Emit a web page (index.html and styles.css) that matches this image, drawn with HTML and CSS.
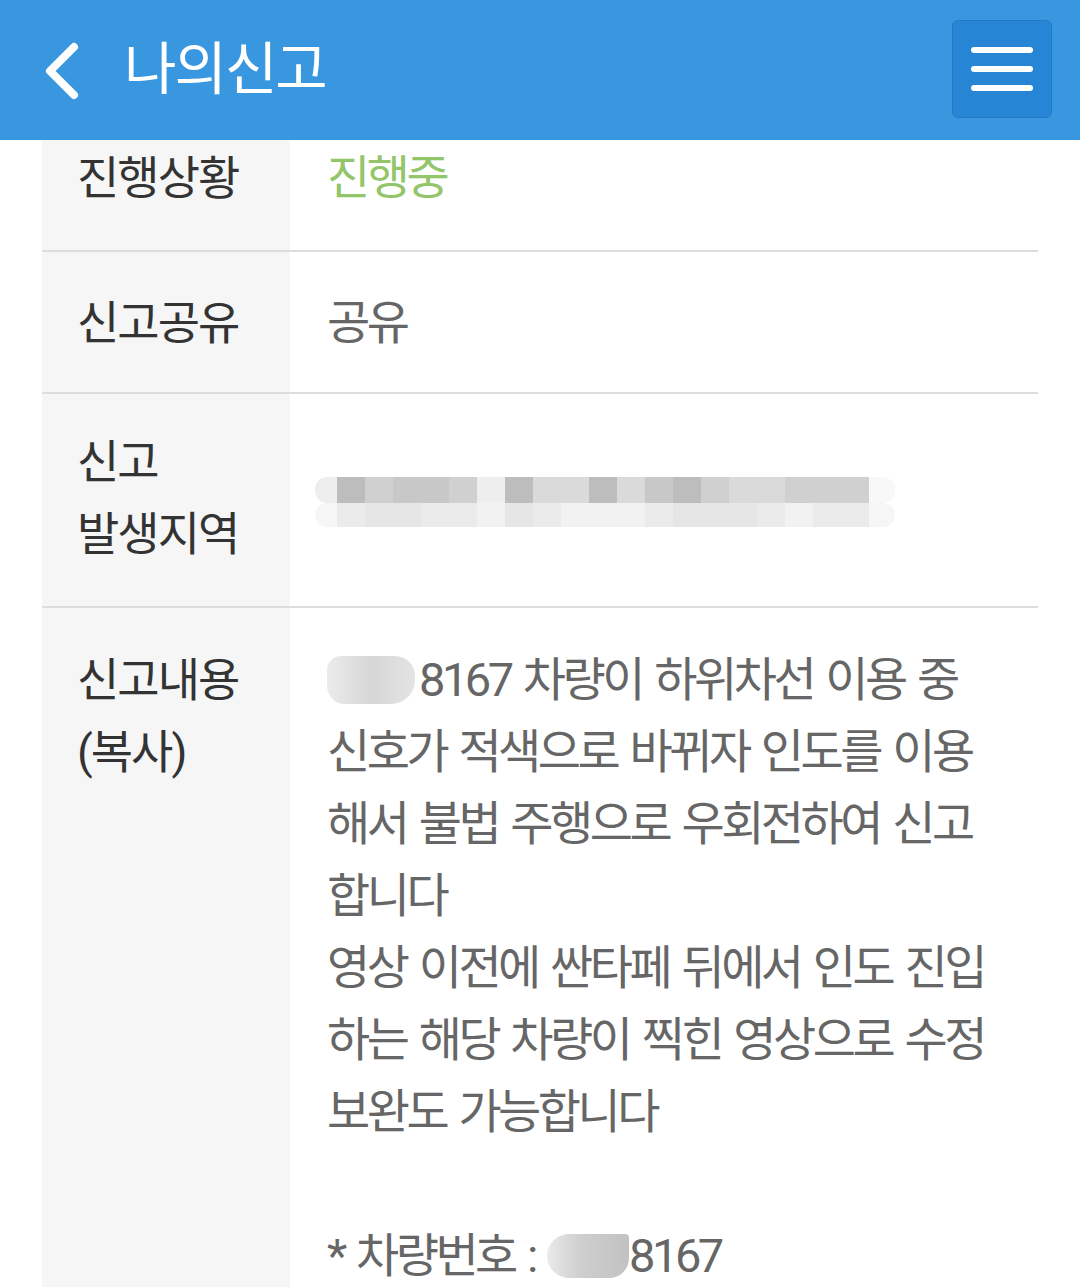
FILE: index.html
```html
<!DOCTYPE html>
<html lang="ko">
<head>
  <meta charset="UTF-8">
  <title>나의신고</title>
  <link rel="stylesheet" href="styles.css">
</head>
<body>
<div class="topbar">
  <svg class="back" width="40" height="60" viewBox="0 0 40 60">
    <polyline points="32,6 8,30 32,54" fill="none" stroke="#fff" stroke-width="8" stroke-linecap="round" stroke-linejoin="round"/>
  </svg>
  <div class="titulo">나의신고</div>
  <div class="menu-btn">
    <span></span><span></span><span></span>
  </div>
</div>

<div class="detalhe">
  <!-- primeira linha cortada pelo scroll -->
  <div class="linha primeira">
    <div class="rotulo">진행상황</div>
    <div class="valor verde">진행중</div>
  </div>

  <div class="linha">
    <div class="rotulo">신고공유</div>
    <div class="valor">공유</div>
  </div>

  <div class="linha endereco">
    <div class="rotulo">신고<br>발생지역</div>
    <div class="valor meio">
      <div class="mosaico">
        <div class="faixa escura">
          <i class="c5"></i><i class="c1"></i><i class="c3"></i><i class="c2"></i><i class="c2"></i><i class="c3"></i><i class="c5"></i><i class="c1"></i><i class="c4"></i><i class="c4"></i><i class="c1"></i><i class="c4"></i><i class="c2"></i><i class="c1"></i><i class="c3"></i><i class="c4"></i><i class="c4"></i><i class="c3"></i><i class="c3"></i><i class="c3"></i><i class="c6"></i>
        </div>
        <div class="faixa clara">
          <i class="d0"></i><i class="d2"></i><i class="d1"></i><i class="d1"></i><i class="d2"></i><i class="d2"></i><i class="d3"></i><i class="d1"></i><i class="d2"></i><i class="d3"></i><i class="d3"></i><i class="d3"></i><i class="d2"></i><i class="d1"></i><i class="d1"></i><i class="d1"></i><i class="d2"></i><i class="d3"></i><i class="d2"></i><i class="d2"></i><i class="d0"></i>
        </div>
      </div>
    </div>
  </div>

  <div class="linha ultima">
    <div class="rotulo">신고내용<br>(복사)</div>
    <div class="valor">
      <span class="borrao"></span>8167 차량이 하위차선 이용 중<br>
      신호가 적색으로 바뀌자 인도를 이용<br>
      해서 불법 주행으로 우회전하여 신고<br>
      합니다<br>
      영상 이전에 싼타페 뒤에서 인도 진입<br>
      하는 해당 차량이 찍힌 영상으로 수정<br>
      보완도 가능합니다<br>
      <br>
      * 차량번호 : <span class="borrao curto"></span>8167
    </div>
  </div>
</div>
</body>
</html>
```

FILE: styles.css
```css
body {
  margin: 0;
  padding: 0;
  background-color: #fff;
  font-family: Roboto, "Noto Sans CJK KR", sans-serif;
}

.topbar {
  height: 140px;
  background-color: #3997df;
  display: flex;
  align-items: center;
  padding: 0 28px 0 42px;
  box-sizing: border-box;
}

.back {
  display: block;
  margin-top: 2px;
}

.titulo {
  color: #fff;
  font-size: 57px;
  letter-spacing: -2px;
  margin-left: 42px;
  line-height: 1;
  margin-top: -2px;
}

.menu-btn {
  margin-left: auto;
  width: 98px;
  height: 96px;
  background-color: #2686d5;
  border: 1px solid #2379c6;
  border-radius: 6px;
  display: flex;
  flex-direction: column;
  align-items: center;
  justify-content: center;
  gap: 13px;
  margin-top: -2px;
}

.menu-btn span {
  display: block;
  width: 62px;
  height: 6px;
  border-radius: 3px;
  background-color: #fff;
}

.detalhe {
  margin: 0 42px;
}

.linha {
  display: grid;
  grid-template-columns: 248px 1fr;
  border-bottom: 2px solid #dddddd;
}

.linha.ultima {
  border-bottom: none;
}

.rotulo {
  background-color: #f6f6f6;
  color: #333;
  font-size: 46px;
  letter-spacing: -2px;
  line-height: 72px;
  padding: 35px 0 33px 35px;
}

.valor {
  color: #666;
  font-size: 47px;
  letter-spacing: -3.5px;
  word-spacing: 4px;
  line-height: 72px;
  padding: 35px 20px 33px 37px;
}

.primeira .rotulo,
.primeira .valor {
  padding-top: 2px;
  padding-bottom: 36px;
}

.endereco .rotulo,
.endereco .valor {
  padding-top: 32px;
  padding-bottom: 36px;
}

.ultima .rotulo,
.ultima .valor {
  padding-top: 36px;
}

.verde {
  color: #93c56a;
}

.meio {
  display: flex;
  align-items: center;
  padding-left: 25px;
}

.mosaico {
  margin-top: 8px;
}

.faixa {
  display: flex;
}

.faixa i {
  display: block;
  width: 28px;
}

.faixa i:first-child {
  width: 22px;
  border-radius: 12px 0 0 12px;
}

.faixa i:last-child {
  width: 26px;
  border-radius: 0 12px 12px 0;
}

.faixa.escura i {
  height: 26px;
}

.faixa.clara i {
  height: 24px;
}

.c1 { background-color: #bdbdbd; }
.c2 { background-color: #c8c8c8; }
.c3 { background-color: #d0d0d0; }
.c4 { background-color: #dadada; }
.c5 { background-color: #eeeeee; }
.c6 { background-color: #f8f8f8; }
.d0 { background-color: #f6f6f6; }
.d1 { background-color: #e6e6e6; }
.d2 { background-color: #ebebeb; }
.d3 { background-color: #f2f2f2; }

.borrao {
  display: inline-block;
  vertical-align: middle;
  width: 88px;
  height: 48px;
  margin-right: 4px;
  margin-top: -8px;
  border-radius: 14px 20px 24px 18px;
  background: linear-gradient(90deg, #ececec, #d6d6d6 50%, #e4e4e4);
}

.borrao.curto {
  width: 82px;
  height: 44px;
  margin-left: 0;
  margin-right: 0;
  border-radius: 22px 4px 20px 22px;
  background: linear-gradient(90deg, #eaeaea, #cfcfcf 40%, #c2c2c2);
}
```
